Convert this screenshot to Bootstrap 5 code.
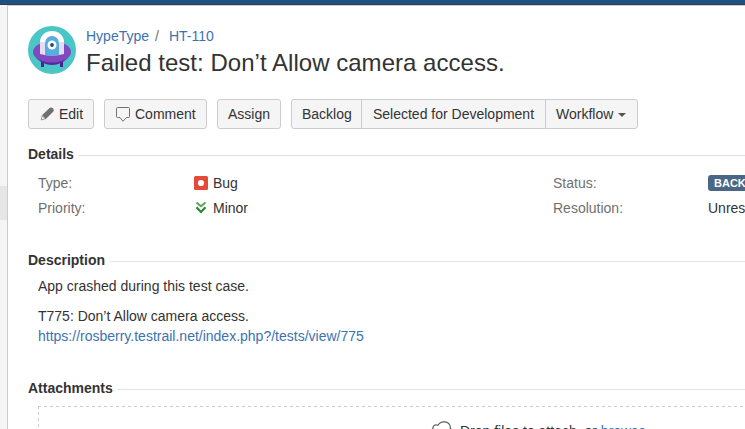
<!DOCTYPE html>
<html lang="en">
<head>
<meta charset="utf-8">
<meta name="viewport" content="width=device-width, initial-scale=1">
<title>HT-110</title>
<link href="https://cdn.jsdelivr.net/npm/bootstrap@5.3.0/dist/css/bootstrap.min.css" rel="stylesheet">
<style>
body{font-family:"Liberation Sans",Arial,sans-serif;font-size:14px;line-height:20px;color:#333;height:429px}
a{color:#3b73af;text-decoration:none}
.topbar{height:5px;background:#205081;border-bottom:1px solid #2e3d54}
.rail{width:8px;background:#f5f5f5;border-right:1px solid #ccc;padding-top:181px}
.rail-handle{height:34px;background:#e6e6e6}
.issue{border-top:1px solid #ccc;padding:20px 0 0 20px;min-width:0}
.heading-text{margin-left:10px}
.crumbs{height:20px}
.crumb-sep{margin:0 10px 0 6px;color:#707070}
.issue h1{font-size:24px;line-height:30px;font-weight:400;margin:2px 0 0;white-space:nowrap;letter-spacing:.03px}
.ops{margin-top:21px;gap:10px}
.ops .btn{--bs-btn-font-size:14px;--bs-btn-line-height:20px;--bs-btn-padding-x:10px;--bs-btn-padding-y:4px;--bs-btn-bg:#f5f5f5;--bs-btn-border-color:#ccc;--bs-btn-color:#333;--bs-btn-border-radius:3px;height:30px;white-space:nowrap}
.op-icon{margin-right:4px}
.op-caret{margin:1px 0 0 5px}
.w-edit{width:66px}.w-comment{width:103px}.w-assign{width:64px}.w-backlog{width:71px}.w-selected{width:185px}.w-workflow{width:93px}
.details{margin-top:15px}
.block{margin-top:32px}
.section-head{height:20px}
.section-head h2{font-size:14px;line-height:20px;font-weight:700;margin:0}
.rule{height:1px;background:#e2e2e2;margin-left:5px;margin-top:3px}
.fields{grid-template-columns:156px 359px 155px auto;row-gap:5px;padding-left:10px;margin-top:9px;white-space:nowrap}
.fields svg{margin:3px 5px 0 0}
.field-name{color:#707070}
.status-pill{background:#4a6785;font-size:11px;line-height:16px;height:16px;border-radius:3px;padding:0 6px;color:#fff}
.body-text{padding-left:10px;margin-top:6px}
.body-text p{margin-bottom:10px}
.dropzone{height:60px;margin:8px 0 0 10px;padding:15px 0 0 392px;white-space:nowrap;
background:repeating-linear-gradient(90deg,#ccc 0 3px,transparent 3px 6px) 0 0/100% 1px no-repeat,repeating-linear-gradient(180deg,#ccc 0 3px,transparent 3px 6px) 0 0/1px 100% no-repeat}
.dropzone svg{margin-right:4px}
</style>
<script src="https://cdn.jsdelivr.net/npm/bootstrap@5.3.0/dist/js/bootstrap.bundle.min.js"></script>
</head>
<body class="d-flex flex-column overflow-hidden">
<header class="topbar flex-shrink-0"></header>
<div class="d-flex flex-grow-1 overflow-hidden">
<aside class="rail flex-shrink-0"><div class="rail-handle"></div></aside>
<main class="issue flex-grow-1">
  <div class="d-flex">
    <svg width="48" height="48" viewBox="0 0 48 48" class="flex-shrink-0" aria-hidden="true">
      <circle cx="24" cy="24" r="24" fill="#4bc6c6"/>
      <path d="M13 35h3v6h-3zM32 35h3v6h-3z" fill="#4a2492"/>
      <path d="M6 28c3 7 11 11 18 11s15-4 18-11z" fill="#5427a0"/>
      <ellipse cx="24" cy="26" rx="19" ry="10.5" fill="#8049c0"/>
      <path d="M12 28V18a12 12 0 0 1 24 0v10q-12 3-24 0z" fill="#e6dcf2"/>
      <path d="M12 16a12 11 0 0 1 24 0z" fill="#fff"/>
      <path d="M17 29V17a7 7 0 0 1 14 0v12q-7 1.3-14 0z" fill="#57ade0"/>
      <circle cx="24" cy="19" r="4.5" fill="#fff"/><circle cx="24" cy="19" r="1.9" fill="#214b73"/>
    </svg>
    <div class="heading-text">
      <div class="crumbs"><a href="#">HypeType</a><span class="crumb-sep">/</span><a href="#">HT-110</a></div>
      <h1>Failed test: Don’t Allow camera access.</h1>
    </div>
  </div>
  <div class="ops d-flex">
    <button class="btn d-flex align-items-center w-edit"><svg class="op-icon flex-shrink-0" width="16" height="16" viewBox="0 0 16 16" aria-hidden="true"><path d="M3 9.2 10.600 1.900Q12.200 .7 14.100 2.400 15.600 4.200 14.200 5.700L6.600 13.200 5 11z" fill="#707070"/><path d="m3.200 9.800-1 4.100 4-1z" fill="#fff" stroke="#707070" stroke-width=".7"/></svg>Edit</button>
    <button class="btn d-flex align-items-center w-comment"><svg class="op-icon flex-shrink-0" width="16" height="16" viewBox="0 0 16 16" aria-hidden="true"><path d="M2.500 1.500h11q1 0 1 1v8q0 1-1 1h-2L8 15.300l-3-3.800H2.500q-1 0-1-1v-8q0-1 1-1z" fill="none" stroke="#707070"/></svg>Comment</button>
    <button class="btn w-assign">Assign</button>
    <div class="btn-group">
      <button class="btn w-backlog">Backlog</button>
      <button class="btn w-selected">Selected for Development</button>
      <button class="btn d-flex align-items-center w-workflow">Workflow<svg class="op-caret" width="8" height="4" viewBox="0 0 8 4" aria-hidden="true"><path d="M0 0h8L4 4z" fill="#555"/></svg></button>
    </div>
  </div>
  <section class="details">
    <div class="section-head d-flex align-items-center"><h2>Details</h2><div class="rule flex-grow-1"></div></div>
    <div class="fields d-grid">
      <div class="field-name">Type:</div>
      <div class="d-flex"><svg width="14" height="14" viewBox="0 0 14 14" aria-hidden="true"><rect width="14" height="14" rx="1.5" fill="#e5493a"/><circle cx="7" cy="7" r="3.1" fill="#fff"/></svg>Bug</div>
      <div class="field-name">Status:</div>
      <div class="d-flex align-items-center"><strong class="status-pill">BACKLOG</strong></div>
      <div class="field-name">Priority:</div>
      <div class="d-flex"><svg width="14" height="14" viewBox="0 0 14 14" aria-hidden="true"><path d="M2.500 1.500 7 5.300l4.500-3.800" fill="none" stroke="#55a557" stroke-width="2"/><path d="M2.500 6.300 7 10.900l4.500-4.600" fill="none" stroke="#2a8735" stroke-width="2.200"/></svg>Minor</div>
      <div class="field-name">Resolution:</div>
      <div>Unresolved</div>
    </div>
  </section>
  <section class="block">
    <div class="section-head d-flex align-items-center"><h2>Description</h2><div class="rule flex-grow-1"></div></div>
    <div class="body-text">
      <p>App crashed during this test case.</p>
      <p class="mb-0">T775: Don’t Allow camera access.<br><a href="#">https://rosberry.testrail.net/index.php?/tests/view/775</a></p>
    </div>
  </section>
  <section class="block">
    <div class="section-head d-flex align-items-center"><h2>Attachments</h2><div class="rule flex-grow-1"></div></div>
    <div class="dropzone d-flex"><svg width="26" height="18" viewBox="0 0 26 18" aria-hidden="true"><path d="M5 16.500C-.5 16-.5 9.500 3 7.800 2.600 4.500 5.500 3 8 4.300 10.500-.6 18.500-.1 20 4.600c.4 1.300.4 2.200.3 3.200 4.200 1 4.200 8.700-.8 8.700z" fill="none" stroke="#606060" stroke-width="1.200"/></svg><span>Drop files to attach, or <a href="#">browse</a>.</span></div>
  </section>
</main>
</div>
</body>
</html>
